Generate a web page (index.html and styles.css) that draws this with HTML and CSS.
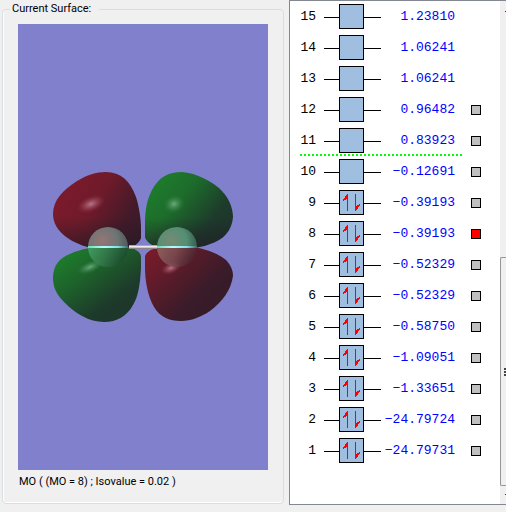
FILE: index.html
```html
<!DOCTYPE html>
<html lang="en">
<head>
<meta charset="utf-8">
<title>MO Editor</title>
<link rel="stylesheet" href="styles.css">
</head>
<body>
<main class="editor">
  <fieldset class="surface">
    <legend>Current Surface:</legend>
    <svg class="view" viewBox="18 24 250 446" preserveAspectRatio="xMidYMid meet" role="img" aria-label="Molecular orbital 8">
      <defs>
        <linearGradient id="redTop" x1="0" y1="0.2" x2="1" y2="0.75"><stop offset="0" stop-color="#7e1b2c"/><stop offset="0.45" stop-color="#6f1a2a"/><stop offset="0.82" stop-color="#431a29"/><stop offset="1" stop-color="#3a1a29"/></linearGradient>
        <linearGradient id="greenTop" x1="0.05" y1="0.1" x2="0.95" y2="0.75"><stop offset="0" stop-color="#1d802b"/><stop offset="0.4" stop-color="#1d6b2b"/><stop offset="0.8" stop-color="#1d3b2b"/><stop offset="1" stop-color="#1d352b"/></linearGradient>
        <linearGradient id="greenLow" x1="0.1" y1="0.1" x2="0.75" y2="0.85"><stop offset="0" stop-color="#1d7e2c"/><stop offset="0.4" stop-color="#1d612b"/><stop offset="0.85" stop-color="#1d3a2a"/><stop offset="1" stop-color="#1d372a"/></linearGradient>
        <linearGradient id="redLow" x1="0.05" y1="0.1" x2="0.75" y2="0.7"><stop offset="0" stop-color="#781b2a"/><stop offset="0.45" stop-color="#571b2a"/><stop offset="0.85" stop-color="#3a1b29"/><stop offset="1" stop-color="#371b29"/></linearGradient>
        <linearGradient id="shade" x1="0" y1="0" x2="0" y2="1"><stop offset="0.6" stop-color="#221a25" stop-opacity="0"/><stop offset="1" stop-color="#221a25" stop-opacity="0.6"/></linearGradient>
        <radialGradient id="pink"><stop offset="0" stop-color="#c08b9b" stop-opacity="0.85"/><stop offset="0.5" stop-color="#a8576a" stop-opacity="0.5"/><stop offset="1" stop-color="#902b40" stop-opacity="0"/></radialGradient>
        <radialGradient id="mint"><stop offset="0" stop-color="#7db98d" stop-opacity="0.8"/><stop offset="0.5" stop-color="#4f9561" stop-opacity="0.5"/><stop offset="1" stop-color="#2a7a3a" stop-opacity="0"/></radialGradient>
        <radialGradient id="atomA" cx="0.35" cy="0.35" r="0.7"><stop offset="0" stop-color="#967577"/><stop offset="0.55" stop-color="#6e7574"/><stop offset="1" stop-color="#495556"/></radialGradient>
        <radialGradient id="atomB" cx="0.35" cy="0.35" r="0.7"><stop offset="0" stop-color="#768b72"/><stop offset="0.55" stop-color="#548f76"/><stop offset="1" stop-color="#305746"/></radialGradient>
        <linearGradient id="underA" x1="0.1" y1="0.4" x2="0.9" y2="0.8"><stop offset="0" stop-color="#49a66d"/><stop offset="0.5" stop-color="#387b51"/><stop offset="1" stop-color="#1d4a2f"/></linearGradient>
        <linearGradient id="underB" x1="0.1" y1="0.4" x2="0.9" y2="0.8"><stop offset="0" stop-color="#92706e"/><stop offset="0.5" stop-color="#7d5456"/><stop offset="1" stop-color="#4a2430"/></linearGradient>
        <linearGradient id="bond" x1="0" y1="0" x2="0" y2="1"><stop offset="0" stop-color="#8d868d"/><stop offset="0.4" stop-color="#f5eeee"/><stop offset="0.65" stop-color="#c9c2c4"/><stop offset="1" stop-color="#675f68"/></linearGradient>
        <linearGradient id="glow"><stop offset="0" stop-color="#70dcb2"/><stop offset="0.4" stop-color="#b4ffff"/><stop offset="0.75" stop-color="#82e0e5"/><stop offset="1" stop-color="#45656a"/></linearGradient>
        <clipPath id="upper"><rect x="18" y="24" width="250" height="223"/></clipPath>
        <clipPath id="lower"><rect x="18" y="247" width="250" height="223"/></clipPath>
        <path id="rt" d="M53 214C53 200 63 190 77 181C87 175 96 172 106 172C121 172 130 181 136 197C139 206 141 219 141 229V238C138 245 132 248 122 248H93C75 245 53 233 53 214Z"/>
        <path id="gt" d="M145 226C145 209 147 200 152 190C159 177 168 172 182 172C196 173 209 180 219 188C228 196 233 207 233 217C232 231 223 240 210 244C203 247 194 248 184 248H158C151 245 146 241 145 237Z"/>
        <path id="gl" d="M53 278C53 264 61 257 72 253C82 249 91 247 106 247H126C135 248 141 252 141 257V268C140 286 138 297 133 305C127 316 117 322 104 322C89 322 75 313 65 303C57 295 53 288 53 278Z"/>
        <path id="rl" d="M145 256C148 249 157 247 168 247H187C201 247 216 252 226 260C231 265 233 271 233 276C231 290 223 301 210 311C201 317 191 321 181 321C169 321 160 317 154 307C148 297 145 281 145 268Z"/>
      </defs>
      <use href="#rt" fill="url(#redTop)"/><use href="#rt" fill="url(#shade)"/>
      <use href="#gt" fill="url(#greenTop)"/><use href="#gt" fill="url(#shade)"/>
      <use href="#gl" fill="url(#greenLow)"/>
      <use href="#rl" fill="url(#redLow)"/>
      <ellipse cx="91" cy="204" rx="15" ry="8" transform="rotate(-22 91 204)" fill="url(#pink)"/>
      <ellipse cx="174" cy="204" rx="11" ry="9" transform="rotate(-22 174 204)" fill="url(#mint)"/>
      <ellipse cx="90" cy="267" rx="14" ry="6" transform="rotate(-22 90 267)" fill="url(#mint)"/>
      <ellipse cx="171" cy="268" rx="11" ry="6" transform="rotate(-22 171 268)" fill="url(#pink)"/>
      <circle cx="108" cy="247" r="20" fill="url(#atomA)" clip-path="url(#upper)"/>
      <circle cx="108" cy="247" r="20" fill="url(#underA)" fill-opacity="0.75" clip-path="url(#lower)"/>
      <circle cx="177" cy="247" r="20" fill="url(#atomB)" clip-path="url(#upper)"/>
      <circle cx="177" cy="247" r="20" fill="url(#underB)" fill-opacity="0.75" clip-path="url(#lower)"/>
      <rect x="88" y="246" width="40" height="2" fill="url(#glow)"/>
      <rect x="157" y="246" width="40" height="2" fill="url(#glow)"/>
      <rect x="129" y="245" width="28" height="4" fill="url(#bond)"/>
    </svg>
    <p class="caption">MO ( (MO = 8) ; Isovalue = 0.02 )</p>
  </fieldset>
  <section class="orbitals">
    <svg width="0" height="0" class="symbols" aria-hidden="true">
      <symbol id="empty" viewBox="0 0 57 25"><path d="M0 13.5H57" stroke="#000"/><rect x="15.5" y="0.5" width="24" height="24" fill="#a0bfe0" stroke="#000"/></symbol>
      <symbol id="pair" viewBox="0 0 57 25"><path d="M0 13.5H57" stroke="#000"/><rect x="15.5" y="0.5" width="24" height="24" fill="#a0bfe0" stroke="#000"/><path d="M23 4H24V21H23ZM31 4H32V21H31Z" fill="#f00"/><path d="M24 4V9H22V10H20V11H19V9H20V8H21V6H22V5H23V4ZM31 21V16H33V15H35V14H36V16H35V17H34V19H33V20H32V21Z" fill="#f00"/></symbol>
    </svg>
    <table class="levels" aria-label="Orbital energies">
      <tbody>
        <tr><th scope="row">15</th><td><svg class="level"><use href="#empty"/></svg></td><td class="energy">1.23810</td><td></td></tr>
        <tr><th scope="row">14</th><td><svg class="level"><use href="#empty"/></svg></td><td class="energy">1.06241</td><td></td></tr>
        <tr><th scope="row">13</th><td><svg class="level"><use href="#empty"/></svg></td><td class="energy">1.06241</td><td></td></tr>
        <tr><th scope="row">12</th><td><svg class="level"><use href="#empty"/></svg></td><td class="energy">0.96482</td><td><input type="checkbox" aria-label="Orbital 12"></td></tr>
        <tr class="gap"><th scope="row">11</th><td><svg class="level"><use href="#empty"/></svg></td><td class="energy">0.83923</td><td><input type="checkbox" aria-label="Orbital 11"></td></tr>
        <tr><th scope="row">10</th><td><svg class="level"><use href="#empty"/></svg></td><td class="energy">−0.12691</td><td><input type="checkbox" aria-label="Orbital 10"></td></tr>
        <tr><th scope="row">9</th><td><svg class="level"><use href="#pair"/></svg></td><td class="energy">−0.39193</td><td><input type="checkbox" aria-label="Orbital 9"></td></tr>
        <tr><th scope="row">8</th><td><svg class="level"><use href="#pair"/></svg></td><td class="energy">−0.39193</td><td><input type="checkbox" aria-label="Orbital 8" checked></td></tr>
        <tr><th scope="row">7</th><td><svg class="level"><use href="#pair"/></svg></td><td class="energy">−0.52329</td><td><input type="checkbox" aria-label="Orbital 7"></td></tr>
        <tr><th scope="row">6</th><td><svg class="level"><use href="#pair"/></svg></td><td class="energy">−0.52329</td><td><input type="checkbox" aria-label="Orbital 6"></td></tr>
        <tr><th scope="row">5</th><td><svg class="level"><use href="#pair"/></svg></td><td class="energy">−0.58750</td><td><input type="checkbox" aria-label="Orbital 5"></td></tr>
        <tr><th scope="row">4</th><td><svg class="level"><use href="#pair"/></svg></td><td class="energy">−1.09051</td><td><input type="checkbox" aria-label="Orbital 4"></td></tr>
        <tr><th scope="row">3</th><td><svg class="level"><use href="#pair"/></svg></td><td class="energy">−1.33651</td><td><input type="checkbox" aria-label="Orbital 3"></td></tr>
        <tr><th scope="row">2</th><td><svg class="level"><use href="#pair"/></svg></td><td class="energy">−24.79724</td><td><input type="checkbox" aria-label="Orbital 2"></td></tr>
        <tr><th scope="row">1</th><td><svg class="level"><use href="#pair"/></svg></td><td class="energy">−24.79731</td><td><input type="checkbox" aria-label="Orbital 1"></td></tr>
      </tbody>
    </table>
    <div class="scrollbar" aria-hidden="true">
      <div class="track"><span class="arrow"></span></div>
      <div class="thumb"><span class="grip"></span></div>
      <div class="foot"><span class="arrow"></span></div>
    </div>
  </section>
</main>
</body>
</html>
```
FILE: styles.css
```css
* { box-sizing: border-box; }

body {
  margin: 0;
  background: #f0f0f0;
  color: #000;
  font: 11px/14px Roboto, Arial, sans-serif;
}

.editor {
  display: flex;
  min-height: 100vh;
  padding-bottom: 7px;
  overflow: hidden;
}

.surface {
  display: flex;
  flex: 1;
  flex-direction: column;
  min-width: 0;
  margin: 2px 5px 1px 2px;
  padding: 8px 15px 14px;
  border: 1px solid #d5dfe5;
  border-radius: 4px;
  box-shadow: inset 1px 0 #fff, inset 0 -1px #fff;
}

.surface legend {
  margin-left: -8px;
  padding: 0 8px 0 2px;
}

.view {
  display: block;
  width: 100%;
  flex: 1;
  min-height: 0;
  background: #8080cc;
}

.caption { margin: 5px 0 0 1px; }

.orbitals {
  display: flex;
  width: 217px;
  border: 1px solid #828790;
  border-right: 0;
  background: #fff;
}

.symbols { position: absolute; }

.levels {
  flex: 1;
  align-self: flex-start;
  margin-left: 10px;
  border-collapse: collapse;
  font: 13px/15px "Liberation Mono", "Courier New", monospace;
}

.levels tr { height: 31px; }
.levels th, .levels td { padding: 0; vertical-align: middle; }
.levels th { width: 24px; padding-right: 8px; font-weight: 400; text-align: right; }
.levels td:nth-child(2) { width: 57px; }
.levels td:last-child { width: 45px; padding-left: 16px; }
.levels .energy { color: #00f; text-align: right; }

.gap {
  background: repeating-linear-gradient(90deg, #0f0 0 2px, #fff 2px 4px) 0 100% / 162px 2px no-repeat;
}

.level { display: block; width: 57px; height: 25px; }

.levels input {
  display: block;
  width: 10px;
  height: 10px;
  margin: 0;
  appearance: none;
  border: 1px solid #000;
  background: #c0c0c0;
}

.levels input:checked { background: #f00; }

.scrollbar {
  display: flex;
  flex-direction: column;
  width: 6px;
  overflow: hidden;
  background: #f0f0f0;
}

.track { height: 256px; padding: 10px 0 0 5px; }

.thumb {
  display: flex;
  flex: 1;
  align-items: center;
  justify-content: flex-end;
  border: 1px solid #979797;
  border-right: 0;
  border-radius: 2px 0 0 2px;
}

.grip {
  width: 2px;
  height: 8px;
  background: repeating-linear-gradient(#444 0 2px, #f0f0f0 2px 3px);
}

.foot { height: 18px; padding: 8px 0 0 5px; }
.arrow { display: block; width: 1px; height: 1px; background: #333; }
```
